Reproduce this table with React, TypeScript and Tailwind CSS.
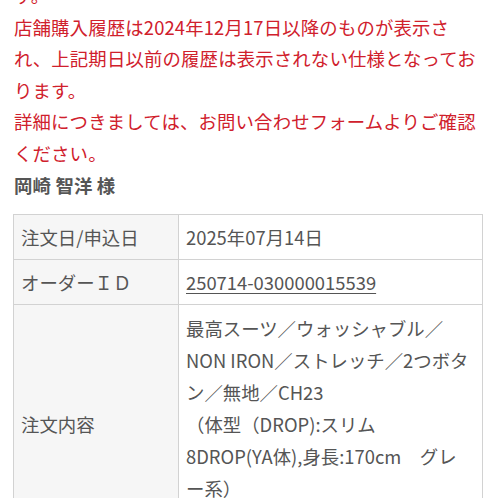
import React from "react";

export default function App() {
  const font = { fontFamily: '"Noto Sans CJK JP", "Noto Sans", sans-serif' };
  return (
    <div className="w-[498px] h-[498px] overflow-hidden bg-white" style={font}>
      <div className="mt-[-20px] pl-[14px] pr-[14px] text-[18.4px] leading-[31.6px] whitespace-nowrap tracking-[0.15px]">
        <p className="text-[#d0202c]">す。</p>
        <p className="text-[#d0202c]">
          店舗購入履歴は2024年12月17日以降のものが表示さ
          <br />
          れ、上記期日以前の履歴は表示されない仕様となってお
          <br />
          ります。
        </p>
        <p className="text-[#d0202c]">
          詳細につきましては、お問い合わせフォームよりご確認
          <br />
          ください。
        </p>
        <p className="font-bold text-[#555]">岡崎 智洋 様</p>
      </div>
      <table className="mt-[13px] ml-[13px] w-[470px] border-collapse text-[18.4px] leading-[32px] text-[#555]">
        <tbody>
          <tr>
            <td className="w-[165px] border-[1.5px] border-[#d2d2d2] bg-[#f6f6f6] px-[7px] py-[6px] align-middle">
              注文日/申込日
            </td>
            <td className="border-[1.5px] border-[#d2d2d2] px-[7px] py-[6px]">2025年07月14日</td>
          </tr>
          <tr>
            <td className="border-[1.5px] border-[#d2d2d2] bg-[#f6f6f6] px-[7px] py-[6px]">オーダーＩＤ</td>
            <td className="border-[1.5px] border-[#d2d2d2] px-[7px] py-[6px]">
              <span className="underline underline-offset-[3px]">250714-030000015539</span>
            </td>
          </tr>
          <tr>
            <td className="border-[1.5px] border-[#d2d2d2] bg-[#f6f6f6] px-[7px] py-[6px] align-middle">注文内容</td>
            <td className="border-[1.5px] border-[#d2d2d2] px-[7px] py-[7px] whitespace-nowrap">
              最高スーツ／ウォッシャブル／
              <br />
              NON IRON／ストレッチ／2つボタ
              <br />
              ン／無地／CH23
              <br />
              （体型（DROP):スリム
              <br />
              8DROP(YA体),身長:170cm　グレ
              <br />
              ー系）
              <br />
              &nbsp;
            </td>
          </tr>
        </tbody>
      </table>
    </div>
  );
}
